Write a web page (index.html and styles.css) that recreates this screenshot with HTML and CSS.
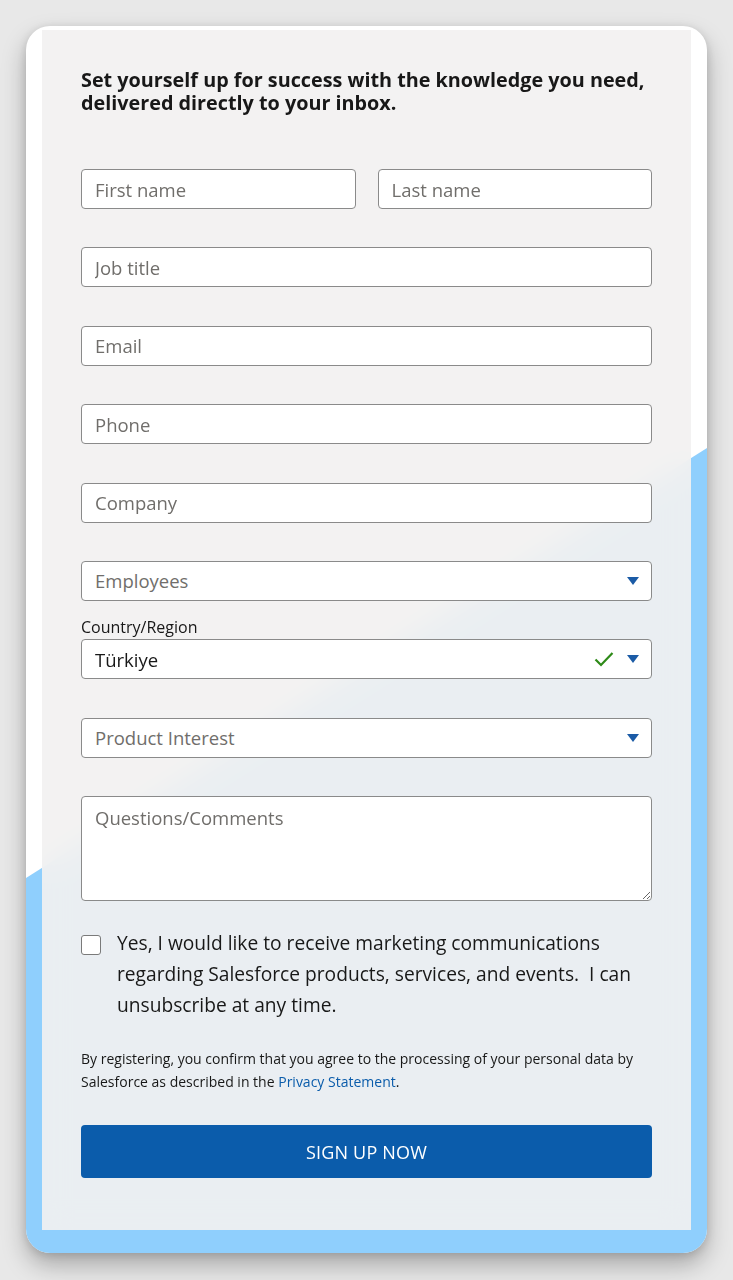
FILE: index.html
```html
<!DOCTYPE html>
<html lang="en">
<head>
<meta charset="utf-8">
<title>Sign up</title>
<link rel="stylesheet" href="styles.css">
</head>
<body>
<div class="card">
  <div class="panel">
    <h1 class="heading">Set yourself up for success with the knowledge you need, delivered directly to your inbox.</h1>
    <form class="form">
      <div class="row two">
        <input class="field" type="text" placeholder="First name">
        <input class="field" type="text" placeholder="Last name">
      </div>
      <input class="field" type="text" placeholder="Job title">
      <input class="field" type="text" placeholder="Email">
      <input class="field" type="text" placeholder="Phone">
      <input class="field" type="text" placeholder="Company">
      <div class="field select">
        <span class="ph">Employees</span>
        <svg class="arrow" width="12" height="8" viewBox="0 0 12 8"><path d="M0 0H12L6 8Z" fill="#1b5ba6"/></svg>
      </div>
      <div class="group">
        <label class="label">Country/Region</label>
        <div class="field select">
          <span class="val">Türkiye</span>
          <svg class="check" width="20" height="16" viewBox="0 0 20 16"><path d="M1.5 8.5L7 14L18.5 2" fill="none" stroke="#2e8a18" stroke-width="2.2"/></svg>
          <svg class="arrow" width="12" height="8" viewBox="0 0 12 8"><path d="M0 0H12L6 8Z" fill="#1b5ba6"/></svg>
        </div>
      </div>
      <div class="field select">
        <span class="ph">Product Interest</span>
        <svg class="arrow" width="12" height="8" viewBox="0 0 12 8"><path d="M0 0H12L6 8Z" fill="#1b5ba6"/></svg>
      </div>
      <textarea class="field area" placeholder="Questions/Comments"></textarea>
      <label class="consent">
        <span class="box"></span>
        <span class="consent-text">Yes, I would like to receive marketing communications regarding Salesforce products, services, and events.&nbsp; I can unsubscribe at any time.</span>
      </label>
      <p class="legal">By registering, you confirm that you agree to the processing of your personal data by Salesforce as described in the <a href="#" class="link">Privacy Statement</a>.</p>
      <button type="button" class="btn">SIGN UP NOW</button>
    </form>
  </div>
</div>
</body>
</html>
```
FILE: styles.css
```css
* { box-sizing: border-box; }
html, body { margin: 0; padding: 0; }
body {
  background: #e8e8e8;
  font-family: "Open Sans", "Noto Sans", sans-serif;
  color: #181818;
  width: 733px;
  height: 1280px;
  overflow: hidden;
  padding-top: 26px;
}
.card {
  position: relative;
  margin: 0 0 0 26px;
  width: 681px;
  height: 1227px;
  background: #ffffff;
  border-radius: 24px;
  overflow: hidden;
  box-shadow: 0 12px 24px rgba(0,0,0,0.28), 0 2px 8px rgba(0,0,0,0.12);
  padding: 4px 16px 0 16px;
}
.card::before {
  content: "";
  position: absolute;
  inset: 0;
  background: #8fcffd;
  clip-path: polygon(0 852px, 100% 422px, 100% 100%, 0 100%);
}
.panel {
  position: relative;
  height: 1200px;
  background: rgba(242, 241, 241, 0.92);
  backdrop-filter: blur(14px);
  padding: 38px 39px 0 39px;
}
.heading {
  margin: 0;
  font-size: 19.8px;
  line-height: 23px;
  font-weight: 700;
  color: #181818;
}
.form {
  display: flex;
  flex-direction: column;
  gap: 38.4px;
  margin-top: 55px;
}
.row.two {
  display: flex;
  gap: 22px;
}
.row.two .field { flex: 1; min-width: 0; }
.field {
  display: flex;
  align-items: center;
  height: 40px;
  width: 100%;
  margin: 0;
  background: #ffffff;
  border: 1px solid #8a8a8a;
  border-radius: 4px;
  padding: 0 13px;
  font-family: "Open Sans", "Noto Sans", sans-serif;
  font-size: 18.5px;
  color: #181818;
  outline: none;
}
.field::placeholder { color: #706e6b; opacity: 1; }
.ph { color: #706e6b; flex: 1; }
.val { color: #181818; flex: 1; }
.select { padding-right: 12px; }
.check { margin-right: 13px; }
.arrow { flex: none; }
.group {
  display: flex;
  flex-direction: column;
  margin-top: -22px;
}
.label {
  font-size: 16px;
  line-height: 20px;
  margin-bottom: 2px;
  color: #181818;
}
.area {
  height: 105px;
  align-items: flex-start;
  padding-top: 8px;
  resize: vertical;
  display: block;
}
.consent {
  display: flex;
  align-items: flex-start;
  gap: 16px;
  margin-top: -6px;
}
.box {
  flex: none;
  width: 20px;
  height: 20px;
  margin-top: 1px;
  border: 1px solid #7a7a7a;
  border-radius: 3px;
  background: #ffffff;
}
.consent-text {
  font-size: 19.2px;
  line-height: 31px;
  margin-top: -7px;
  color: #181818;
}
.legal {
  margin: -11px 0 0 0;
  font-size: 14px;
  line-height: 23px;
  color: #181818;
}
.link { color: #0b5cab; text-decoration: none; }
.btn {
  margin-top: -6px;
  height: 53px;
  width: 100%;
  background: #0b5cab;
  color: #ffffff;
  border: none;
  border-radius: 4px;
  font-family: "Open Sans", "Noto Sans", sans-serif;
  font-size: 18px;
  letter-spacing: 0.2px;
}
```
